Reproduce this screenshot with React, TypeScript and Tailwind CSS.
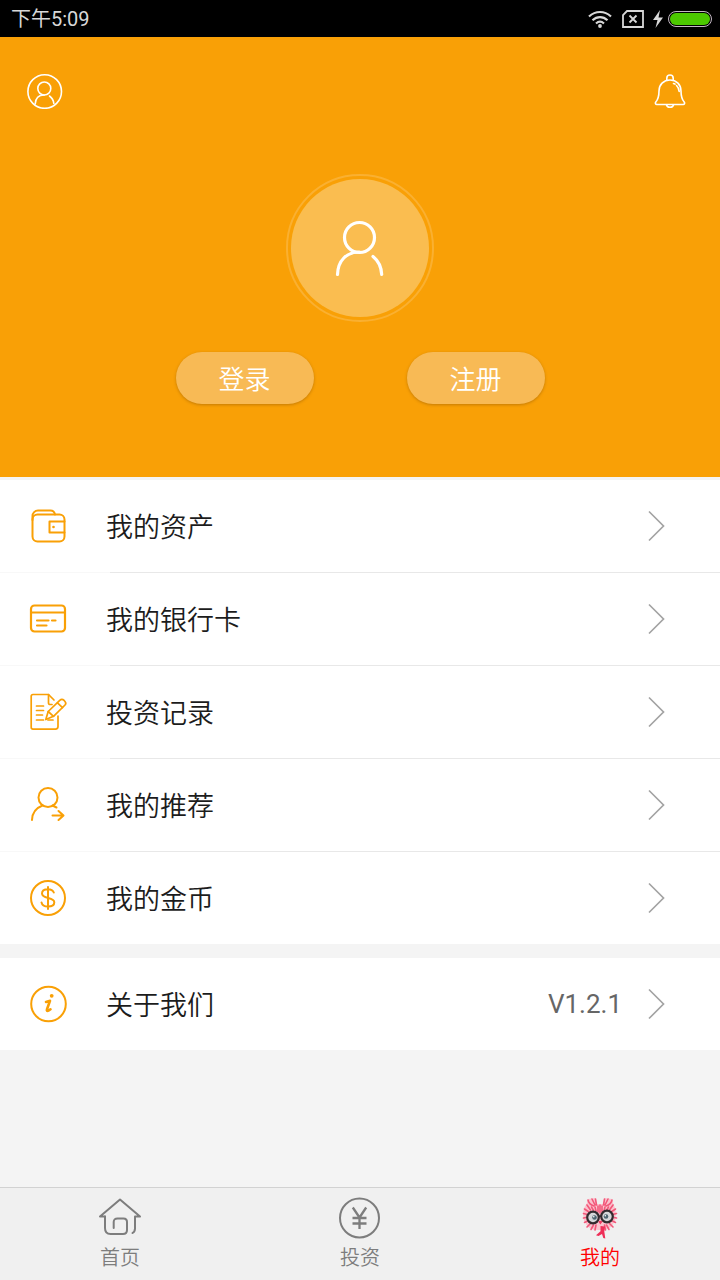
import React from "react";

const Icon = ({ size, className, strokeWidth = 2, children }: any) => (
  <svg
    width={size}
    height={size}
    viewBox={`0 0 ${size} ${size}`}
    fill="none"
    stroke="currentColor"
    strokeWidth={strokeWidth}
    strokeLinecap="round"
    strokeLinejoin="round"
    className={className}
    aria-hidden="true"
  >
    {children}
  </svg>
);

const WalletIcon = () => (
  <Icon size={40}>
    <rect x="4.5" y="8.5" width="32" height="27" rx="5" />
    <path d="M4.5 14V10a5.500 5.500 0 0 1 5.500-5.500h12.500c2.500 0 4 1.500 4.500 4" />
    <path d="M36.500 15.500H21.500v11h15" />
    <circle cx="25.500" cy="21" r="1.300" fill="currentColor" stroke="none" />
  </Icon>
);

const CardIcon = () => (
  <Icon size={40} strokeWidth={2.2}>
    <rect x="3" y="6.500" width="34" height="26" rx="3.500" />
    <path d="M3 13.500h34M9 21.500h11.500M24 21.500h3.500M9 26.500h9.500" />
  </Icon>
);

const RecordIcon = () => (
  <Icon size={40} strokeWidth={1.7}>
    <path d="M26 8 20.500 2.500H5A1.800 1.800 0 0 0 3.200 4.300v31A1.800 1.800 0 0 0 5 37.100h22.500a2.500 2.500 0 0 0 2.500-2.500V24" />
    <path d="M20.500 2.500v8.500a1.500 1.500 0 0 0 1.500 1.500h2" />
    <path d="M8.500 14h7M8.500 18.500h7M8.500 23h6M8.500 28h7M20 28h5" />
    <path d="M17.800 27.500 20.200 19.500 32 8.200a2.600 2.600 0 0 1 3.800 0l1.200 1.300a2.600 2.600 0 0 1 0 3.500L25.500 24.300z" />
    <path d="m20.200 19.500 5.300 4.800M29.500 10.800l5 4.800" />
  </Icon>
);

const RecommendIcon = () => (
  <Icon size={40}>
    <circle cx="20" cy="12.500" r="9.500" />
    <path d="M14.500 20.500C8 23 4.200 28 4 35M24.500 20.500l4 2" />
    <path d="M24.500 30.500H35M30.500 26l5 4.500-5 4.500" />
  </Icon>
);

const CoinIcon = () => (
  <Icon size={40}>
    <circle cx="20" cy="20" r="17" />
    <path d="M25.800 14.500c-.8-2-3-3.200-5.800-3.200-3.500 0-6 1.500-6 4.200 0 6 12.300 3 12.300 8.800 0 2.800-2.700 4.300-6.300 4.300s-6-1.500-6.500-4.200M20 9v22" />
  </Icon>
);

const InfoIcon = () => (
  <Icon size={40}>
    <circle cx="20.500" cy="20" r="17.300" />
    <circle cx="23.700" cy="11.800" r="1.900" fill="currentColor" stroke="none" />
    <path d="m18 18 4-1.200-3 8.500c-.6 2 .5 2.300 3.500 0" strokeWidth="2.600" />
  </Icon>
);

const ChevronIcon = () => (
  <svg width="20" height="34" viewBox="0 0 20 34" fill="none" stroke="#a3a3a3" strokeWidth="1.700" aria-hidden="true">
    <path d="m3 2.500 14.500 14.500L3 31.500" />
  </svg>
);

const PersonCircleIcon = () => (
  <Icon size={36} strokeWidth={1.6}>
    <circle cx="17.700" cy="18.500" r="16.800" />
    <circle cx="17.300" cy="15.500" r="6.500" />
    <path d="M8.200 31c.3-5.500 3.500-9 9-9M22.500 23c2.500 1.800 4 4.300 4.300 7.500" />
  </Icon>
);

const BellIcon = () => (
  <Icon size={36} strokeWidth={1.6}>
    <path d="M14.800 7V5.200a3.200 3.200 0 0 1 6.400 0V7" />
    <path d="M18 7c-6.500 0-11 4.800-11 11 0 6-1 8.500-3.200 11-1 1.200-.2 2.500 1 2.500h26.400c1.200 0 2-1.300 1-2.500C30 26.500 29 24 29 18c0-6.200-4.500-11-11-11z" />
    <path d="M14.500 32c.5 1.600 1.800 2.300 3.500 2.300s3-.7 3.500-2.300M21.500 10.500l1.500.6M24.500 12.500c1.600 1.500 2.500 3.300 2.700 6" />
  </Icon>
);

const HomeIcon = () => (
  <Icon size={44}>
    <path d="M7 20.500H2L22 3.500 42 20.500H37v12c0 2.300-.7 3.500-2.500 4.500" />
    <path d="M7 20.500v11.500c0 4 1.500 6 5.500 6H25c2.500 0 4-1.200 4-4v-8c0-2.200-1.200-3.500-3.500-3.500h-6c-2.500 0-3.800 1.200-3.800 3.500V32" />
  </Icon>
);

const InvestIcon = () => (
  <Icon size={44}>
    <circle cx="21.500" cy="22" r="19.500" />
    <path d="m14.800 11.500 6.700 10 6.700-10M21.500 21.500v11.500M14.500 22h14M14.500 27.500h14" strokeLinecap="butt" strokeWidth="2.300" />
  </Icon>
);

// mascot: fluffy round head, black glasses, small red tie
const MascotIcon = () => (
  <svg width="44" height="44" viewBox="0 0 44 44" fill="none" aria-hidden="true">
    <path
      d="M10 3l7-1 2 6h6l2-6 7 1 1 4 2 5 1 6-1 7-4 6-6 3H16l-6-3-4-6-1-7 1-6 3-5z"
      fill="#fbc3ce"
    />
    <g stroke="#f2587a" strokeWidth="1.600" strokeLinecap="round">
      <path d="M10 4c.5 3 3 5 6 6M34 4c-.5 3-3 5-6 6M14 3l3 6M30 3l-3 6M17.500 3l1 6M26.500 3l-1 6" />
      <path d="M20 10v6M22 9v8M24 10v6M17 11l1 4M27 11l-1 4M13.500 11l2 3.500M30.500 11l-2 3.500" />
      <path d="M9 9l3.500 5M35 9l-3.500 5M6.500 13l4.500 3M37.500 13l-4.500 3M5.500 17.500l3 .8M38.500 17.500l-3 .8M5.500 22l2.500-.5M38.500 22l-2.500-.5" />
      <path d="M6.500 26.500l3-1.500M37.500 26.500l-3-1.500M9 31l3.500-3.500M35 31l-3.500-3.500M13 33.500l2.500-4.500M31 33.500l-2.500-4.500M17 34l1-5M27.500 34l-1-5" />
    </g>
    <circle cx="15" cy="21.500" r="5.800" fill="#d5d7d9" stroke="#332a2e" strokeWidth="2.200" />
    <circle cx="29" cy="20.500" r="5.800" fill="#d5d7d9" stroke="#332a2e" strokeWidth="2.200" />
    <path d="M20.500 20.800c1-.8 2-.8 3-.5" stroke="#332a2e" strokeWidth="1.600" />
    <circle cx="16.500" cy="21.500" r="2.300" fill="#4c6470" />
    <circle cx="28" cy="20.500" r="2.300" fill="#4c6470" />
    <circle cx="15.800" cy="20.700" r=".8" fill="#fff" />
    <circle cx="27.300" cy="19.700" r=".8" fill="#fff" />
    <path d="M20.300 25.500c1-1 3.200-1 4.200 0L22.400 28.500z" fill="#ee3a60" />
    <path d="M22.500 30l4.500.5-.7 5 1 7-2-.5-1.300-4-3.500 2-2.500-.7 4.500-4z" fill="#ee2e57" />
  </svg>
);

const menu = [
  { label: "我的资产", icon: <WalletIcon /> },
  { label: "我的银行卡", icon: <CardIcon /> },
  { label: "投资记录", icon: <RecordIcon /> },
  { label: "我的推荐", icon: <RecommendIcon /> },
  { label: "我的金币", icon: <CoinIcon /> },
];

const tabs = [
  { label: "首页", icon: <HomeIcon />, active: false },
  { label: "投资", icon: <InvestIcon />, active: false },
  { label: "我的", icon: <MascotIcon />, active: true },
];

const MenuRow = ({ label, icon, extra }: any) => (
  <a href="#" className="flex h-[92px] items-center bg-white pl-7 pr-[54px]">
    <span className="text-[#f9a006]">{icon}</span>
    <span className="ml-[38px] flex-1 text-[27px] font-[350] leading-10 text-[#1c1c1c]">{label}</span>
    {extra && <span className="mr-6 font-[Roboto,sans-serif] text-[26px] leading-10 text-[#666666]">{extra}</span>}
    <ChevronIcon />
  </a>
);

const StatusBar = () => (
  <div className="flex h-[37px] items-center justify-between bg-black pl-[11px] pr-2 font-[Roboto,'Noto_Sans_CJK_SC',sans-serif] text-[#d8d8d8]">
    <span className="text-[20px] leading-6">下午5:09</span>
    <div className="flex items-center">
      <svg width="24" height="18" viewBox="0 0 24 18" fill="none" stroke="currentColor" strokeWidth="2.200" aria-hidden="true">
        <path d="M1 6.500c6.500-6 15.500-6 22 0M4.500 10.200c4.500-4.200 10.500-4.200 15 0M8 13.500c2.400-2.200 5.600-2.200 8 0" />
        <circle cx="12" cy="16" r="1.900" fill="currentColor" stroke="none" />
      </svg>
      <svg width="22" height="18" viewBox="0 0 22 18" fill="none" stroke="currentColor" strokeWidth="1.800" className="ml-[10px]" aria-hidden="true">
        <path d="M5 1h16v16H1V5zM7.500 5.500l7 7M14.500 5.500l-7 7" />
      </svg>
      <svg width="12" height="20" viewBox="0 0 12 20" fill="currentColor" className="ml-2" aria-hidden="true">
        <path d="M8 1 1 11h4.500L3.500 19 11 8.500H6.500z" />
      </svg>
      <div className="ml-1 h-4 w-11 rounded-full border border-[#c4b8c4] p-px">
        <div className="h-full rounded-full bg-[#4cc800]" />
      </div>
    </div>
  </div>
);

const PillButton = ({ children }: any) => (
  <button
    type="button"
    className="h-[52px] w-[138px] rounded-full bg-[#f8ba55] text-[26px] font-[350] leading-9 text-white shadow-[0_1px_3px_rgba(120,70,0,0.4)]"
  >
    {children}
  </button>
);

const App = () => {
  return (
    <div className="flex min-h-screen flex-col bg-[#f4f4f4] font-['Noto_Sans_CJK_SC',sans-serif]">
      <StatusBar />

      <header className="bg-[#f9a006] pb-[73px] text-white">
        <div className="flex justify-between px-[27px] pt-9">
          <button type="button" aria-label="个人信息">
            <PersonCircleIcon />
          </button>
          <button type="button" aria-label="消息" className="mr-[5px]">
            <BellIcon />
          </button>
        </div>
        <div className="mx-auto mt-[65px] size-[148px] rounded-full border-2 border-[#fab031] p-[3px]">
          <div className="flex h-full items-center justify-center rounded-full bg-[#fabd50]">
            <Icon size={60} strokeWidth={3.2}>
              <circle cx="29.500" cy="19.500" r="15" />
              <path d="M7.500 56.500c.5-14 9-22.500 22-22.500M43 38.500c5 4 8.300 10 8.700 18" />
            </Icon>
          </div>
        </div>
        <div className="mt-[30px] flex justify-center gap-[93px]">
          <PillButton>登录</PillButton>
          <PillButton>注册</PillButton>
        </div>
      </header>

      <main className="pt-[3px]">
        <ul>
          {menu.map((item, i) => (
            <li key={item.label}>
              <MenuRow label={item.label} icon={item.icon} />
              {i < menu.length - 1 && (
                <div className="flex h-px">
                  <div className="w-[110px] bg-[#f8f8f8]" />
                  <div className="flex-1 bg-[#e8e8e8]" />
                </div>
              )}
            </li>
          ))}
        </ul>
        <div className="mt-[14px]">
          <MenuRow label="关于我们" icon={<InfoIcon />} extra="V1.2.1" />
        </div>
      </main>

      <nav className="mt-auto flex h-[93px] border-t border-[#d2d2d2] bg-[#f0f0f0]">
        {tabs.map((tab) => (
          <a
            key={tab.label}
            href="#"
            className={`flex flex-1 flex-col items-center pt-2 text-[20px] font-[350] leading-7 ${
              tab.active ? "text-[#ff0000]" : "text-[#7d7d7d]"
            }`}
          >
            {tab.icon}
            <span className="mt-[3px]">{tab.label}</span>
          </a>
        ))}
      </nav>
    </div>
  );
};

export default App;
